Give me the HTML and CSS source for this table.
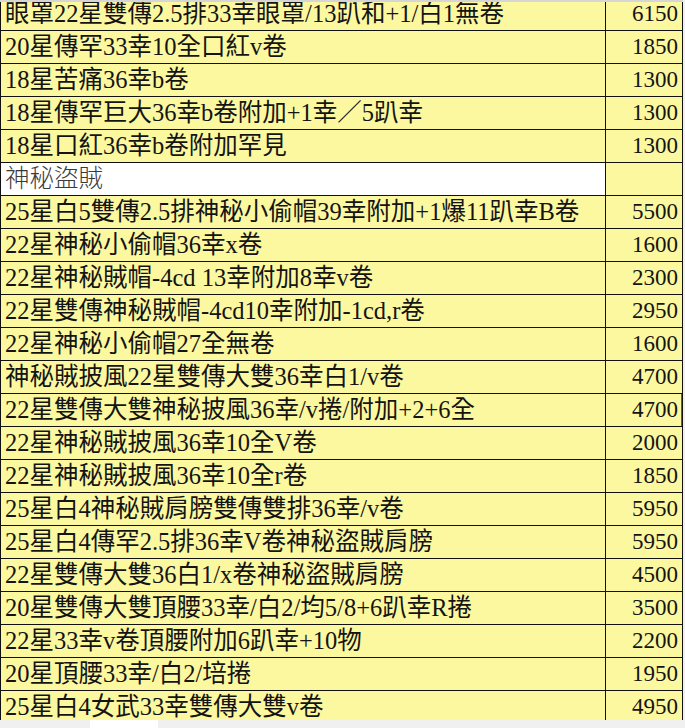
FILE: index.html
```html
<!DOCTYPE html>
<html lang="zh-Hant">
<head>
<meta charset="utf-8">
<link rel="stylesheet" href="styles.css">
<title>Sheet</title>
</head>
<body>
<div class="sheet">
  <div class="grid">
    <div class="c name">眼罩22星雙傳2.5排33幸眼罩/13趴和+1/白1無卷</div><div class="c num">6150</div>
    <div class="c name">20星傳罕33幸10全口紅v卷</div><div class="c num">1850</div>
    <div class="c name">18星苦痛36幸b卷</div><div class="c num">1300</div>
    <div class="c name">18星傳罕巨大36幸b卷附加+1幸／5趴幸</div><div class="c num">1300</div>
    <div class="c name">18星口紅36幸b卷附加罕見</div><div class="c num">1300</div>
    <div class="c name head">神秘盜賊</div><div class="c num"></div>
    <div class="c name">25星白5雙傳2.5排神秘小偷帽39幸附加+1爆11趴幸B卷</div><div class="c num">5500</div>
    <div class="c name">22星神秘小偷帽36幸x卷</div><div class="c num">1600</div>
    <div class="c name">22星神秘賊帽-4cd 13幸附加8幸v卷</div><div class="c num">2300</div>
    <div class="c name">22星雙傳神秘賊帽-4cd10幸附加-1cd,r卷</div><div class="c num">2950</div>
    <div class="c name">22星神秘小偷帽27全無卷</div><div class="c num">1600</div>
    <div class="c name">神秘賊披風22星雙傳大雙36幸白1/v卷</div><div class="c num">4700</div>
    <div class="c name">22星雙傳大雙神秘披風36幸/v捲/附加+2+6全</div><div class="c num sel">4700</div>
    <div class="c name">22星神秘賊披風36幸10全V卷</div><div class="c num">2000</div>
    <div class="c name">22星神秘賊披風36幸10全r卷</div><div class="c num">1850</div>
    <div class="c name">25星白4神秘賊肩膀雙傳雙排36幸/v卷</div><div class="c num">5950</div>
    <div class="c name">25星白4傳罕2.5排36幸V卷神秘盜賊肩膀</div><div class="c num">5950</div>
    <div class="c name">22星雙傳大雙36白1/x卷神秘盜賊肩膀</div><div class="c num">4500</div>
    <div class="c name">20星雙傳大雙頂腰33幸/白2/均5/8+6趴幸R捲</div><div class="c num">3500</div>
    <div class="c name">22星33幸v卷頂腰附加6趴幸+10物</div><div class="c num">2200</div>
    <div class="c name">20星頂腰33幸/白2/培捲</div><div class="c num">1950</div>
    <div class="c name">25星白4女武33幸雙傳大雙v卷</div><div class="c num">4950</div>
  </div>
</div>
<div class="tabs"><div class="tab"></div></div>
</body>
</html>
```
FILE: styles.css
```css
html, body {
  margin: 0;
  padding: 0;
  background: #f0f0f0;
}
body {
  width: 685px;
  height: 728px;
  overflow: hidden;
}
.sheet {
  height: 718px;
  border-top: 2px solid #d6d6d6;
  overflow: hidden;
  width: 683px;
}
.grid {
  margin-top: -4px;
  display: grid;
  grid-template-columns: 605px 77px;
  grid-auto-rows: 33px;
  border-left: 1px solid #111;
  font-family: "Liberation Serif", "Noto Sans CJK TC", serif;
  font-size: 24.5px;
  color: #141414;
}
.c {
  box-sizing: border-box;
  background: #fcf8a0;
  border-right: 1px solid #111;
  border-bottom: 1px solid #111;
  line-height: 32px;
  white-space: nowrap;
  overflow: hidden;
}
.name {
  padding-left: 4px;
}
.num {
  text-align: right;
  padding-right: 4px;
  font-size: 23px;
}
.head {
  background: #ffffff;
  color: #3a3a3a;
  font-weight: 300;
}
.sel {
  box-shadow: inset -1px 0 0 #2e7d32;
}
.tabs {
  height: 8px;
  padding-left: 90px;
}
.tab {
  width: 68px;
  height: 8px;
  background: #ffffff;
}
```
